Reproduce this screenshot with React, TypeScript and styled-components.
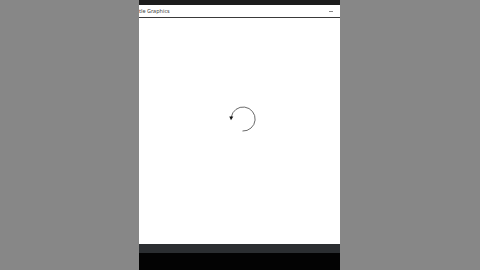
import React from "react";
import styled, { createGlobalStyle } from "styled-components";

const GlobalStyle = createGlobalStyle`
  html, body {
    margin: 0;
    padding: 0;
    background: #878787;
    font-family: "Segoe UI", "Noto Sans", "Liberation Sans", sans-serif;
  }
`;

const Page = styled.div`
  width: 480px;
  height: 270px;
  display: flex;
  padding-left: 139px;
  box-sizing: border-box;
  overflow: hidden;
`;

const Phone = styled.div`
  width: 201px;
  height: 270px;
  display: flex;
  flex-direction: column;
  background: #000;
`;

const StatusBar = styled.div`
  height: 5px;
  background: #1c1c1c;
`;

const TitleBar = styled.div`
  height: 12px;
  background: #fff;
  border-bottom: 1px solid #3a3a3a;
  display: flex;
  align-items: center;
  justify-content: space-between;
  padding-right: 7px;
  font-size: 5.5px;
  color: #444;
  overflow: hidden;
  white-space: nowrap;
`;

const Title = styled.span`
  margin-left: 0;
`;

const Minimize = styled.span`
  width: 4px;
  height: 1px;
  background: #888;
`;

const Canvas = styled.div`
  flex: 1;
  background: #fff;
  display: flex;
  align-items: center;
  justify-content: center;
  padding-left: 6px;
  padding-bottom: 24px;
`;

const NavBar = styled.div`
  height: 9px;
  background: #2b2e31;
`;

const Bottom = styled.div`
  height: 17px;
  background: #030303;
`;

const Spinner = () => (
  <svg width="30" height="30" viewBox="0 0 30 30">
    <path
      d="M3.3 13 A12 12 0 1 1 14.5 27"
      fill="none"
      stroke="#444"
      strokeWidth="0.8"
    />
    <path d="M1.3 12.6 L5.3 12.4 L3.0 16.2 Z" fill="#111" />
  </svg>
);

export default function App() {
  return (
    <>
      <GlobalStyle />
      <Page>
        <Phone>
          <StatusBar />
          <TitleBar>
            <Title>tle Graphics</Title>
            <Minimize />
          </TitleBar>
          <Canvas>
            <Spinner />
          </Canvas>
          <NavBar />
          <Bottom />
        </Phone>
      </Page>
    </>
  );
}
